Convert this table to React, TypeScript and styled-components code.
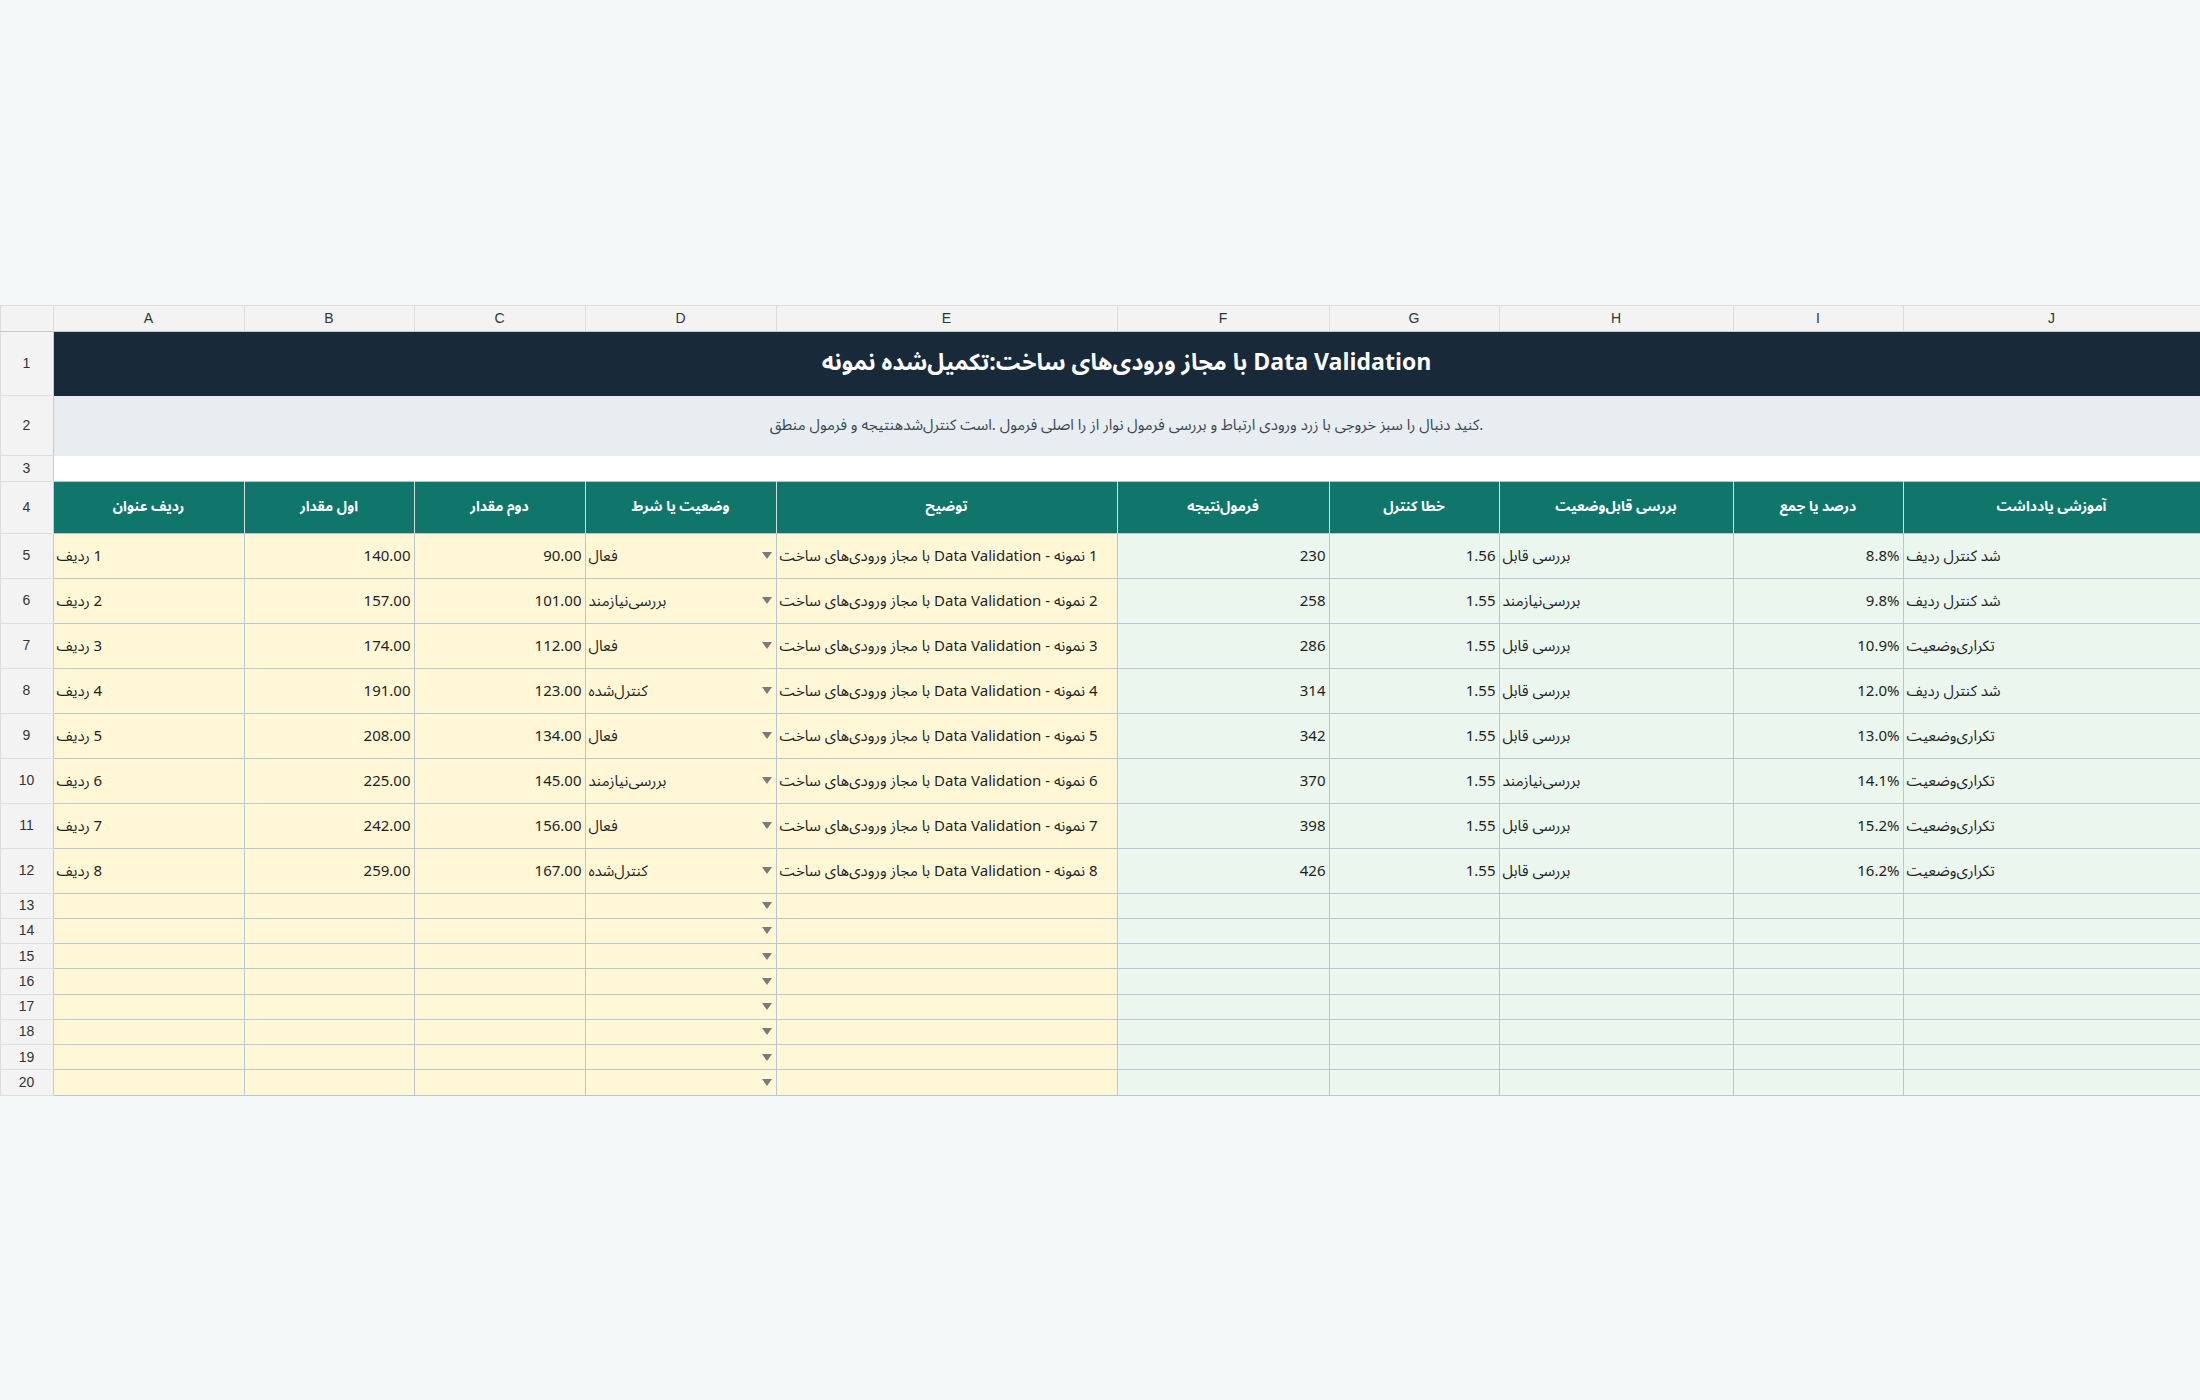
import * as React from 'react';
import styled, { createGlobalStyle } from 'styled-components';

const GlobalStyle = createGlobalStyle`
  html, body {
    margin: 0;
    padding: 0;
  }
  body {
    background: #f5f8f9;
    font-family: "Noto Sans Arabic", "Noto Sans", "DejaVu Sans", sans-serif;
  }
`;

const Page = styled.div`
  min-height: 100vh;
  display: flex;
  align-items: center;
  justify-content: center;
`;

const Sheet = styled.table`
  border-collapse: collapse;
  table-layout: fixed;
  width: 2200px;
  background: #ffffff;
  line-height: 1.2;
`;

const Col = styled.col<{ $w: number }>`
  width: ${p => p.$w}px;
`;

const Corner = styled.th`
  height: 25px;
  padding: 0;
  background: #f3f3f3;
  border: 1px solid #dcdcdc;
  border-bottom-color: #c9c9c9;
`;

const Letter = styled.th`
  height: 25px;
  padding: 0;
  background: #f3f3f3;
  border: 1px solid #dcdcdc;
  border-bottom-color: #c9c9c9;
  font-family: "Liberation Sans", Arial, sans-serif;
  font-size: 14px;
  font-weight: 400;
  color: #333;
  text-align: center;
`;

const RowNum = styled.th<{ $h: number }>`
  height: ${p => p.$h}px;
  padding: 0;
  background: #f3f3f3;
  border: 1px solid #dedede;
  border-right-color: #c9c9c9;
  font-family: "Liberation Sans", Arial, sans-serif;
  font-size: 14px;
  font-weight: 400;
  color: #333;
  text-align: center;
`;

const TitleCell = styled.td`
  padding: 0 8px;
  background: #182a3a;
  color: #ffffff;
  font-size: 23px;
  font-weight: 700;
  text-align: center;
  direction: rtl;
  border: 1px solid #182a3a;
`;

const NoteCell = styled.td`
  padding: 0 8px;
  background: #e8edf2;
  color: #3b4650;
  font-size: 15px;
  text-align: center;
  direction: rtl;
  border: 1px solid #e8edf2;
`;

const Gap = styled.td`
  padding: 0;
  background: #ffffff;
`;

const HeadCell = styled.th`
  padding: 0 4px;
  background: #10766c;
  color: #ffffff;
  font-size: 14px;
  font-weight: 700;
  text-align: center;
  direction: rtl;
  border: 1px solid #d3dedd;
  border-top-color: #b9c6cf;
  border-bottom-color: #b9c6cf;
`;

type Tone = 'in' | 'out';

const Cell = styled.td<{ $tone: Tone; $num?: boolean }>`
  padding: 0 3px;
  background: ${p => (p.$tone === 'in' ? '#fff7d6' : '#eaf6ee')};
  border: 1px solid #b9c6cf;
  color: #1f1f1f;
  font-size: 15px;
  white-space: nowrap;
  overflow: hidden;
  text-align: ${p => (p.$num ? 'right' : 'left')};
  direction: ${p => (p.$num ? 'ltr' : 'rtl')};
`;

const Pick = styled.div`
  display: flex;
  align-items: center;
  justify-content: space-between;
  direction: ltr;
`;

const PickText = styled.span`
  direction: rtl;
`;

const Caret = styled.span`
  width: 0;
  height: 0;
  margin-right: 1px;
  border-left: 5px solid transparent;
  border-right: 5px solid transparent;
  border-top: 7px solid #7a7a7a;
`;

const widths = [53, 191, 170, 171, 191, 341, 212, 170, 234, 170, 297];
const letters = ['A', 'B', 'C', 'D', 'E', 'F', 'G', 'H', 'I', 'J'];

const heads = [
  'ردیف عنوان',
  'اول مقدار',
  'دوم مقدار',
  'وضعیت یا شرط',
  'توضیح',
  'فرمول‌نتیجه',
  'خطا  کنترل',
  'بررسی قابل‌وضعیت',
  'درصد یا جمع',
  'آموزشی یادداشت',
];

const ACTIVE = 'فعال';
const REVIEW = 'بررسی‌نیازمند';
const DONE = 'کنترل‌شده';
const CAN = 'بررسی قابل';
const ROWOK = 'شد  کنترل ردیف';
const DUP = 'تکراری‌وضعیت';

type Row = {
  first: number;
  second: number;
  state: string;
  err: string;
  check: string;
  pct: string;
  note: string;
};

const rows: Row[] = [
  { first: 140, second: 90, state: ACTIVE, err: '1.56', check: CAN, pct: '8.8%', note: ROWOK },
  { first: 157, second: 101, state: REVIEW, err: '1.55', check: REVIEW, pct: '9.8%', note: ROWOK },
  { first: 174, second: 112, state: ACTIVE, err: '1.55', check: CAN, pct: '10.9%', note: DUP },
  { first: 191, second: 123, state: DONE, err: '1.55', check: CAN, pct: '12.0%', note: ROWOK },
  { first: 208, second: 134, state: ACTIVE, err: '1.55', check: CAN, pct: '13.0%', note: DUP },
  { first: 225, second: 145, state: REVIEW, err: '1.55', check: REVIEW, pct: '14.1%', note: DUP },
  { first: 242, second: 156, state: ACTIVE, err: '1.55', check: CAN, pct: '15.2%', note: DUP },
  { first: 259, second: 167, state: DONE, err: '1.55', check: CAN, pct: '16.2%', note: DUP },
];

const DropCell = ({ text }: { text?: string }) => (
  <Cell $tone="in">
    <Pick>
      <PickText>{text}</PickText>
      <Caret />
    </Pick>
  </Cell>
);

const App = () => {
  return (
    <>
      <GlobalStyle />
      <Page>
        <Sheet>
          <colgroup>
            {widths.map((w, i) => (
              <Col key={i} $w={w} />
            ))}
          </colgroup>
          <thead>
            <tr>
              <Corner />
              {letters.map(l => (
                <Letter key={l}>{l}</Letter>
              ))}
            </tr>
          </thead>
          <tbody>
            <tr>
              <RowNum $h={63}>1</RowNum>
              <TitleCell colSpan={10}>Data Validation با مجاز ورودی‌های ساخت:تکمیل‌شده نمونه</TitleCell>
            </tr>
            <tr>
              <RowNum $h={59}>2</RowNum>
              <NoteCell colSpan={10}>
                .کنید دنبال را سبز خروجی با زرد ورودی ارتباط و بررسی فرمول نوار از را اصلی فرمول .است  کنترل‌شدهنتیجه و فرمول منطق
              </NoteCell>
            </tr>
            <tr>
              <RowNum $h={25}>3</RowNum>
              <Gap colSpan={10} />
            </tr>
            <tr>
              <RowNum $h={51}>4</RowNum>
              {heads.map(h => (
                <HeadCell key={h}>{h}</HeadCell>
              ))}
            </tr>
            {rows.map((r, i) => (
              <tr key={i}>
                <RowNum $h={44}>{i + 5}</RowNum>
                <Cell $tone="in">{`${i + 1} ردیف`}</Cell>
                <Cell $tone="in" $num>{r.first.toFixed(2)}</Cell>
                <Cell $tone="in" $num>{r.second.toFixed(2)}</Cell>
                <DropCell text={r.state} />
                <Cell $tone="in">{`${i + 1} نمونه - Data Validation با مجاز ورودی‌های ساخت`}</Cell>
                <Cell $tone="out" $num>{r.first + r.second}</Cell>
                <Cell $tone="out" $num>{r.err}</Cell>
                <Cell $tone="out">{r.check}</Cell>
                <Cell $tone="out" $num>{r.pct}</Cell>
                <Cell $tone="out">{r.note}</Cell>
              </tr>
            ))}
            {Array.from({ length: 8 }, (_, i) => (
              <tr key={`e${i}`}>
                <RowNum $h={24.25}>{i + 13}</RowNum>
                <Cell $tone="in" />
                <Cell $tone="in" />
                <Cell $tone="in" />
                <DropCell />
                <Cell $tone="in" />
                <Cell $tone="out" />
                <Cell $tone="out" />
                <Cell $tone="out" />
                <Cell $tone="out" />
                <Cell $tone="out" />
              </tr>
            ))}
          </tbody>
        </Sheet>
      </Page>
    </>
  );
};

export default App;
